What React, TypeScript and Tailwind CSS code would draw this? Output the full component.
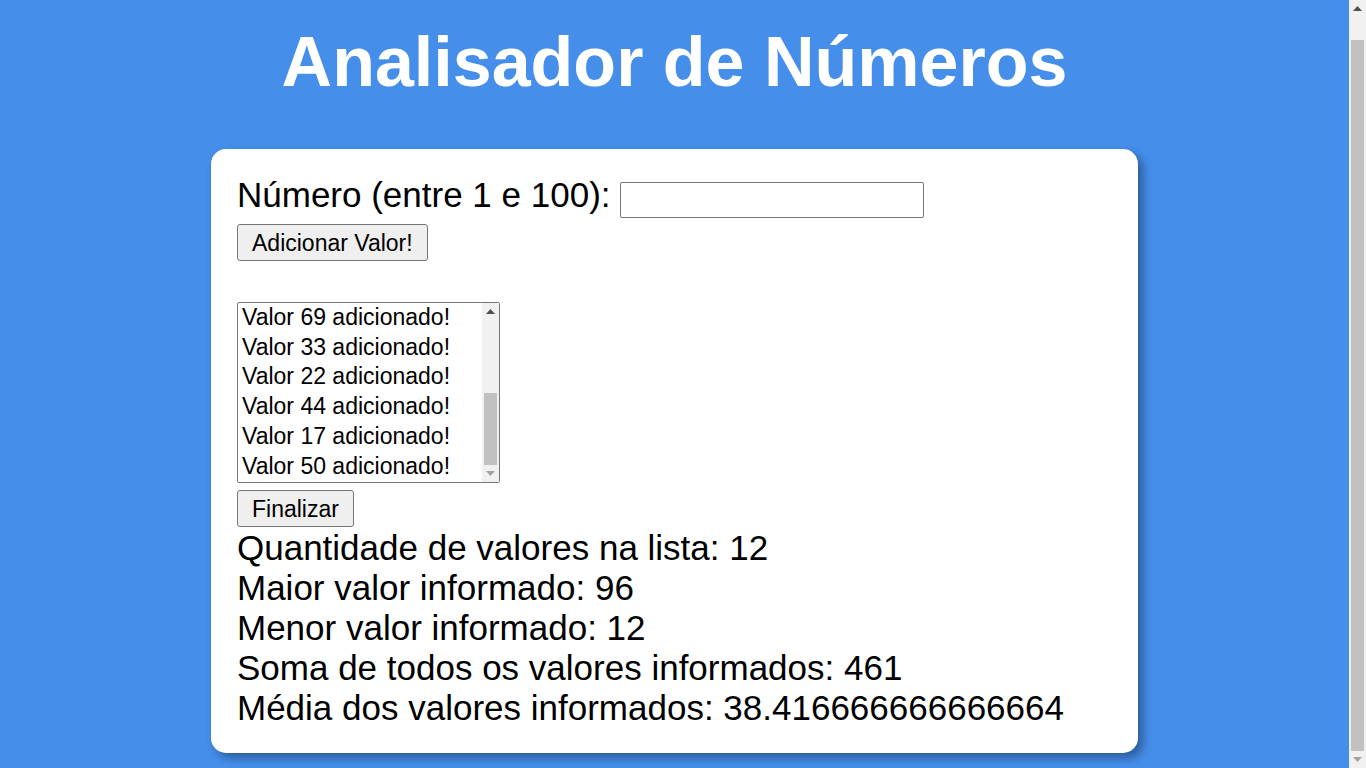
import React from 'react';

const valores = [96, 25, 38, 12, 41, 14, 69, 33, 22, 44, 17, 50];

const Seta = ({ dir, cor }: { dir: 'up' | 'down'; cor: string }) => (
  <svg width="9" height="5" viewBox="0 0 9 5" className="block">
    {dir === 'up' ? <polygon points="0,5 4.5,0 9,5" fill={cor} /> : <polygon points="0,0 4.5,5 9,0" fill={cor} />}
  </svg>
);

const App: React.FC = () => {
  const soma = valores.reduce((a, b) => a + b, 0);
  const media = soma / valores.length;
  // list is scrolled to the end: only the last six show
  const visiveis = valores.slice(-6);

  return (
    <div className="min-h-screen bg-[#458eea] pb-[40px] pr-[17px] pt-[22px] font-['Liberation_Sans',Arial,sans-serif]">
      <h1 className="text-center text-[70px] font-bold leading-[80px] text-white">Analisador de Números</h1>

      <div className="mx-auto mt-[47px] w-[927px] rounded-[15px] bg-white px-[26px] pb-[25px] pt-[26px] text-black shadow-[5px_5px_10px_rgba(0,0,0,0.35)]">
        <div className="flex items-start">
          <span className="text-[35px] leading-[39px]">Número (entre 1 e 100):</span>
          <input
            type="number"
            className="ml-[9px] mt-[7px] h-[36px] w-[304px] rounded-[2px] border border-[#767676] bg-white px-[3px] text-[23px] outline-none"
          />
        </div>

        <button className="mt-[6px] block h-[37px] rounded-[3px] border border-[#767676] bg-[#efefef] px-[14px] text-[23px] leading-[26px]">
          Adicionar Valor!
        </button>

        <div className="mt-[41px] flex h-[181px] w-[263px] rounded-[2px] border border-[#767676] bg-white">
          <div className="flex-1 overflow-hidden">
            {visiveis.map((v, i) => (
              <div key={i} className="pl-[4px] text-[23px] leading-[29.7px]">
                Valor {v} adicionado!
              </div>
            ))}
          </div>
          <div className="flex w-[17px] flex-col items-center bg-[#f1f1f1]">
            <div className="flex h-[17px] items-center justify-center">
              <Seta dir="up" cor="#505050" />
            </div>
            <div className="flex w-full flex-1 flex-col justify-end px-[2px]">
              <div className="h-[72px] w-full bg-[#c1c1c1]" />
            </div>
            <div className="flex h-[17px] items-center justify-center">
              <Seta dir="down" cor="#a3a3a3" />
            </div>
          </div>
        </div>

        <button className="mt-[7px] block h-[37px] rounded-[3px] border border-[#767676] bg-[#efefef] px-[14px] text-[23px] leading-[26px]">
          Finalizar
        </button>

        <div className="mt-[1px] text-[35px] leading-[40px]">
          <p>Quantidade de valores na lista: {valores.length}</p>
          <p>Maior valor informado: {Math.max(...valores)}</p>
          <p>Menor valor informado: {Math.min(...valores)}</p>
          <p>Soma de todos os valores informados: {soma}</p>
          <p>Média dos valores informados: {media}</p>
        </div>
      </div>

      {/* page scrollbar */}
      <div className="fixed right-0 top-0 flex h-screen w-[17px] flex-col bg-[#f1f1f1]">
        <div className="flex h-[17px] items-center justify-center">
          <Seta dir="up" cor="#505050" />
        </div>
        <div className="flex-1 px-[2px] pt-[23px]">
          <div className="h-[711px] w-full bg-[#c1c1c1]" />
        </div>
        <div className="flex h-[17px] items-center justify-center">
          <Seta dir="down" cor="#a3a3a3" />
        </div>
      </div>
    </div>
  );
};

export default App;
